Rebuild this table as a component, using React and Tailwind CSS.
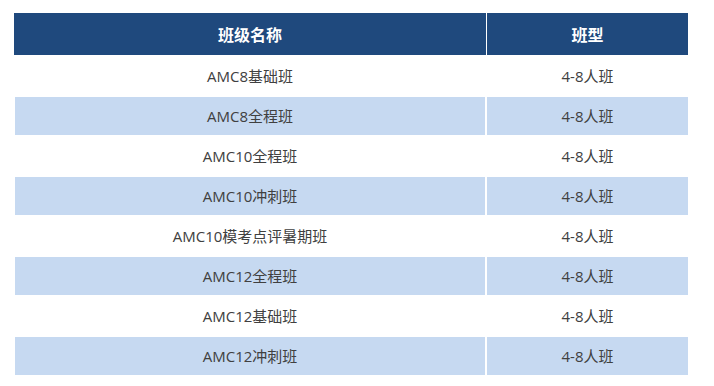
export default function App() {
  const rows = [
    "AMC8基础班",
    "AMC8全程班",
    "AMC10全程班",
    "AMC10冲刺班",
    "AMC10模考点评暑期班",
    "AMC12全程班",
    "AMC12基础班",
    "AMC12冲刺班",
  ];
  return (
    <div
      className="w-[714px] h-[386px] bg-white pt-[13px] pl-[14px]"
      style={{ fontFamily: '"Noto Sans CJK SC", "Noto Sans", sans-serif' }}
    >
      <div className="w-[674px] flex flex-col">
        <div className="flex h-[42px] bg-white">
          <div className="w-[472px] bg-[#1f497d] flex items-center justify-center text-white font-bold text-[16px]">
            班级名称
          </div>
          <div className="w-[1px]" />
          <div className="w-[201px] bg-[#1f497d] flex items-center justify-center text-white font-bold text-[16px]">
            班型
          </div>
        </div>
        {rows.map((r, i) => {
          const blue = i % 2 === 1;
          return (
            <div
              key={r}
              className="h-[40px] pt-[2px] flex text-[15px] text-[#404040]"
              style={{ fontFamily: '"Open Sans", "Noto Sans CJK SC", sans-serif' }}
            >
              <div
                className={
                  "ml-[1px] w-[470px] flex items-center justify-center " +
                  (blue ? "bg-[#c6d9f1]" : "bg-white")
                }
              >
                {r}
              </div>
              <div className="w-[2px]" />
              <div
                className={
                  "w-[201px] flex items-center justify-center " +
                  (blue ? "bg-[#c6d9f1]" : "bg-white")
                }
              >
                4-8人班
              </div>
            </div>
          );
        })}
      </div>
    </div>
  );
}
